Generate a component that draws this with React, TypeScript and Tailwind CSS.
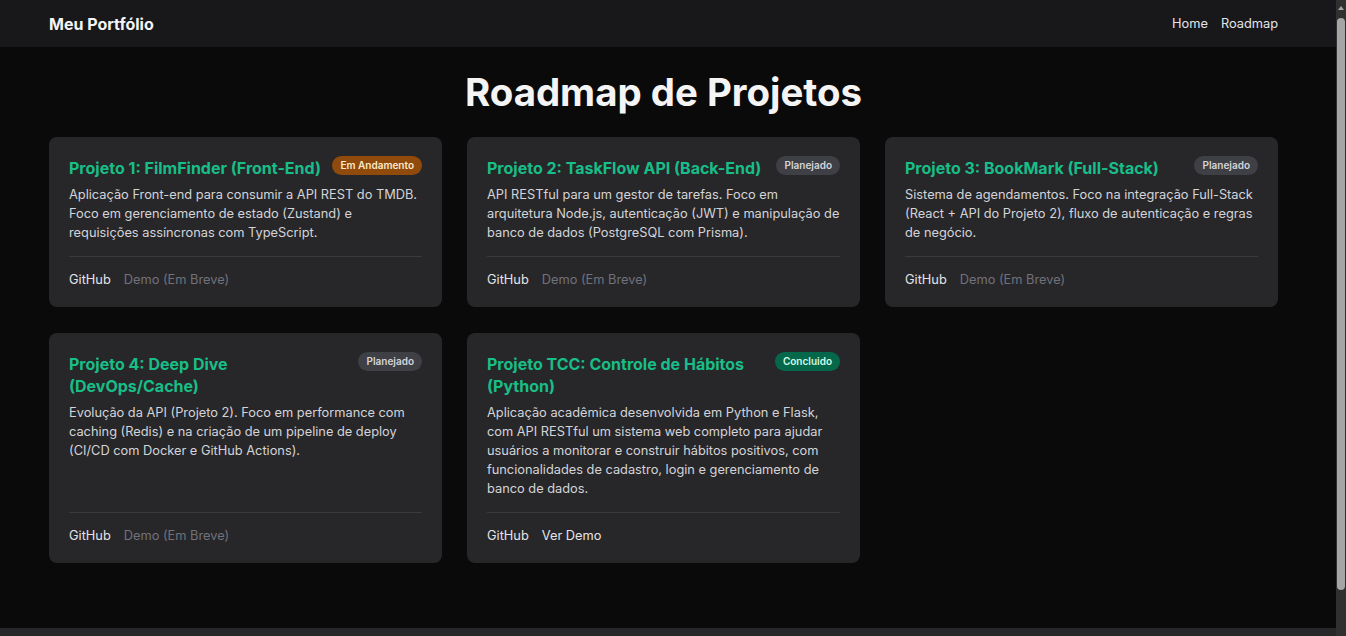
const projects = [
  {
    title: "Projeto 1: FilmFinder (Front-End)",
    status: "Em Andamento",
    description:
      "Aplicação Front-end para consumir a API REST do TMDB. Foco em gerenciamento de estado (Zustand) e requisições assíncronas com TypeScript.",
    demo: null,
  },
  {
    title: "Projeto 2: TaskFlow API (Back-End)",
    status: "Planejado",
    description:
      "API RESTful para um gestor de tarefas. Foco em arquitetura Node.js, autenticação (JWT) e manipulação de banco de dados (PostgreSQL com Prisma).",
    demo: null,
  },
  {
    title: "Projeto 3: BookMark (Full-Stack)",
    status: "Planejado",
    description:
      "Sistema de agendamentos. Foco na integração Full-Stack (React + API do Projeto 2), fluxo de autenticação e regras de negócio.",
    demo: null,
  },
  {
    title: "Projeto 4: Deep Dive (DevOps/Cache)",
    status: "Planejado",
    description:
      "Evolução da API (Projeto 2). Foco em performance com caching (Redis) e na criação de um pipeline de deploy (CI/CD com Docker e GitHub Actions).",
    demo: null,
  },
  {
    title: "Projeto TCC: Controle de Hábitos (Python)",
    status: "Concluido",
    description:
      "Aplicação acadêmica desenvolvida em Python e Flask, com API RESTful um sistema web completo para ajudar usuários a monitorar e construir hábitos positivos, com funcionalidades de cadastro, login e gerenciamento de banco de dados.",
    demo: "Ver Demo",
  },
];

const badgeStyles: Record<string, string> = {
  "Em Andamento": "bg-[#8f4a0c] text-[#fde9c8]",
  Planejado: "bg-[#3f3f46] text-[#d4d4d8]",
  Concluido: "bg-[#06684a] text-[#d1fae5]",
};

function ProjectCard({ project }: { project: (typeof projects)[number] }) {
  return (
    <div className="flex flex-col rounded-lg bg-[#27272a] px-5 pt-5 pb-[18px]">
      <div className="flex items-start justify-between gap-2">
        <h3 className="text-[16px] leading-[22px] font-bold text-[#18be87]">{project.title}</h3>
        <span
          className={`mt-[-1px] shrink-0 rounded-full px-[8px] py-[3px] text-[10px] leading-[13px] font-semibold ${badgeStyles[project.status]}`}
        >
          {project.status}
        </span>
      </div>
      <p className="mt-[6px] flex-1 text-[12.8px] leading-[19px] text-[#d4d4d8]">{project.description}</p>
      <div className="mt-[14px] flex gap-[13px] border-t border-[#3a3a3e] pt-[13px] text-[12.8px] leading-[19px]">
        <span className="text-[#e4e4e7]">GitHub</span>
        {project.demo ? (
          <span className="text-[#e4e4e7]">{project.demo}</span>
        ) : (
          <span className="text-[#71717a]">Demo (Em Breve)</span>
        )}
      </div>
    </div>
  );
}

function Scrollbar() {
  return (
    <div className="flex w-[10px] shrink-0 flex-col items-center bg-[#303030]">
      <svg width="10" height="18" viewBox="0 0 10 18" className="shrink-0">
        <path d="M2 10 L5 6 L8 10 Z" fill="#a3a3a3" />
      </svg>
      <div className="h-[572px] w-[8px] rounded-[4px] bg-[#a5a5a5]" />
    </div>
  );
}

export default function App() {
  return (
    <div className="flex h-screen overflow-hidden bg-[#0a0a0a] font-['Inter',sans-serif]">
      <div className="flex-1 overflow-hidden">
        <header className="flex h-[47px] items-center justify-between bg-[#18181b] pl-[49px] pr-[58px]">
          <span className="text-[16px] font-bold text-[#f4f4f5]">Meu Portfólio</span>
          <nav className="flex gap-[13px] text-[12.8px] text-[#e4e4e7]">
            <a>Home</a>
            <a>Roadmap</a>
          </nav>
        </header>

        <main className="pl-[49px] pr-[58px] pt-[24px] pb-[65px]">
          <h1 className="mb-[24px] text-center text-[38.4px] leading-[42px] font-bold text-[#f4f4f5]">
            Roadmap de Projetos
          </h1>
          <div className="grid grid-cols-3 gap-x-[25px] gap-y-[26px]">
            {projects.map((p) => (
              <ProjectCard key={p.title} project={p} />
            ))}
          </div>
        </main>

        <footer className="h-[41px] bg-[#27272a]" />
      </div>
      <Scrollbar />
    </div>
  );
}
